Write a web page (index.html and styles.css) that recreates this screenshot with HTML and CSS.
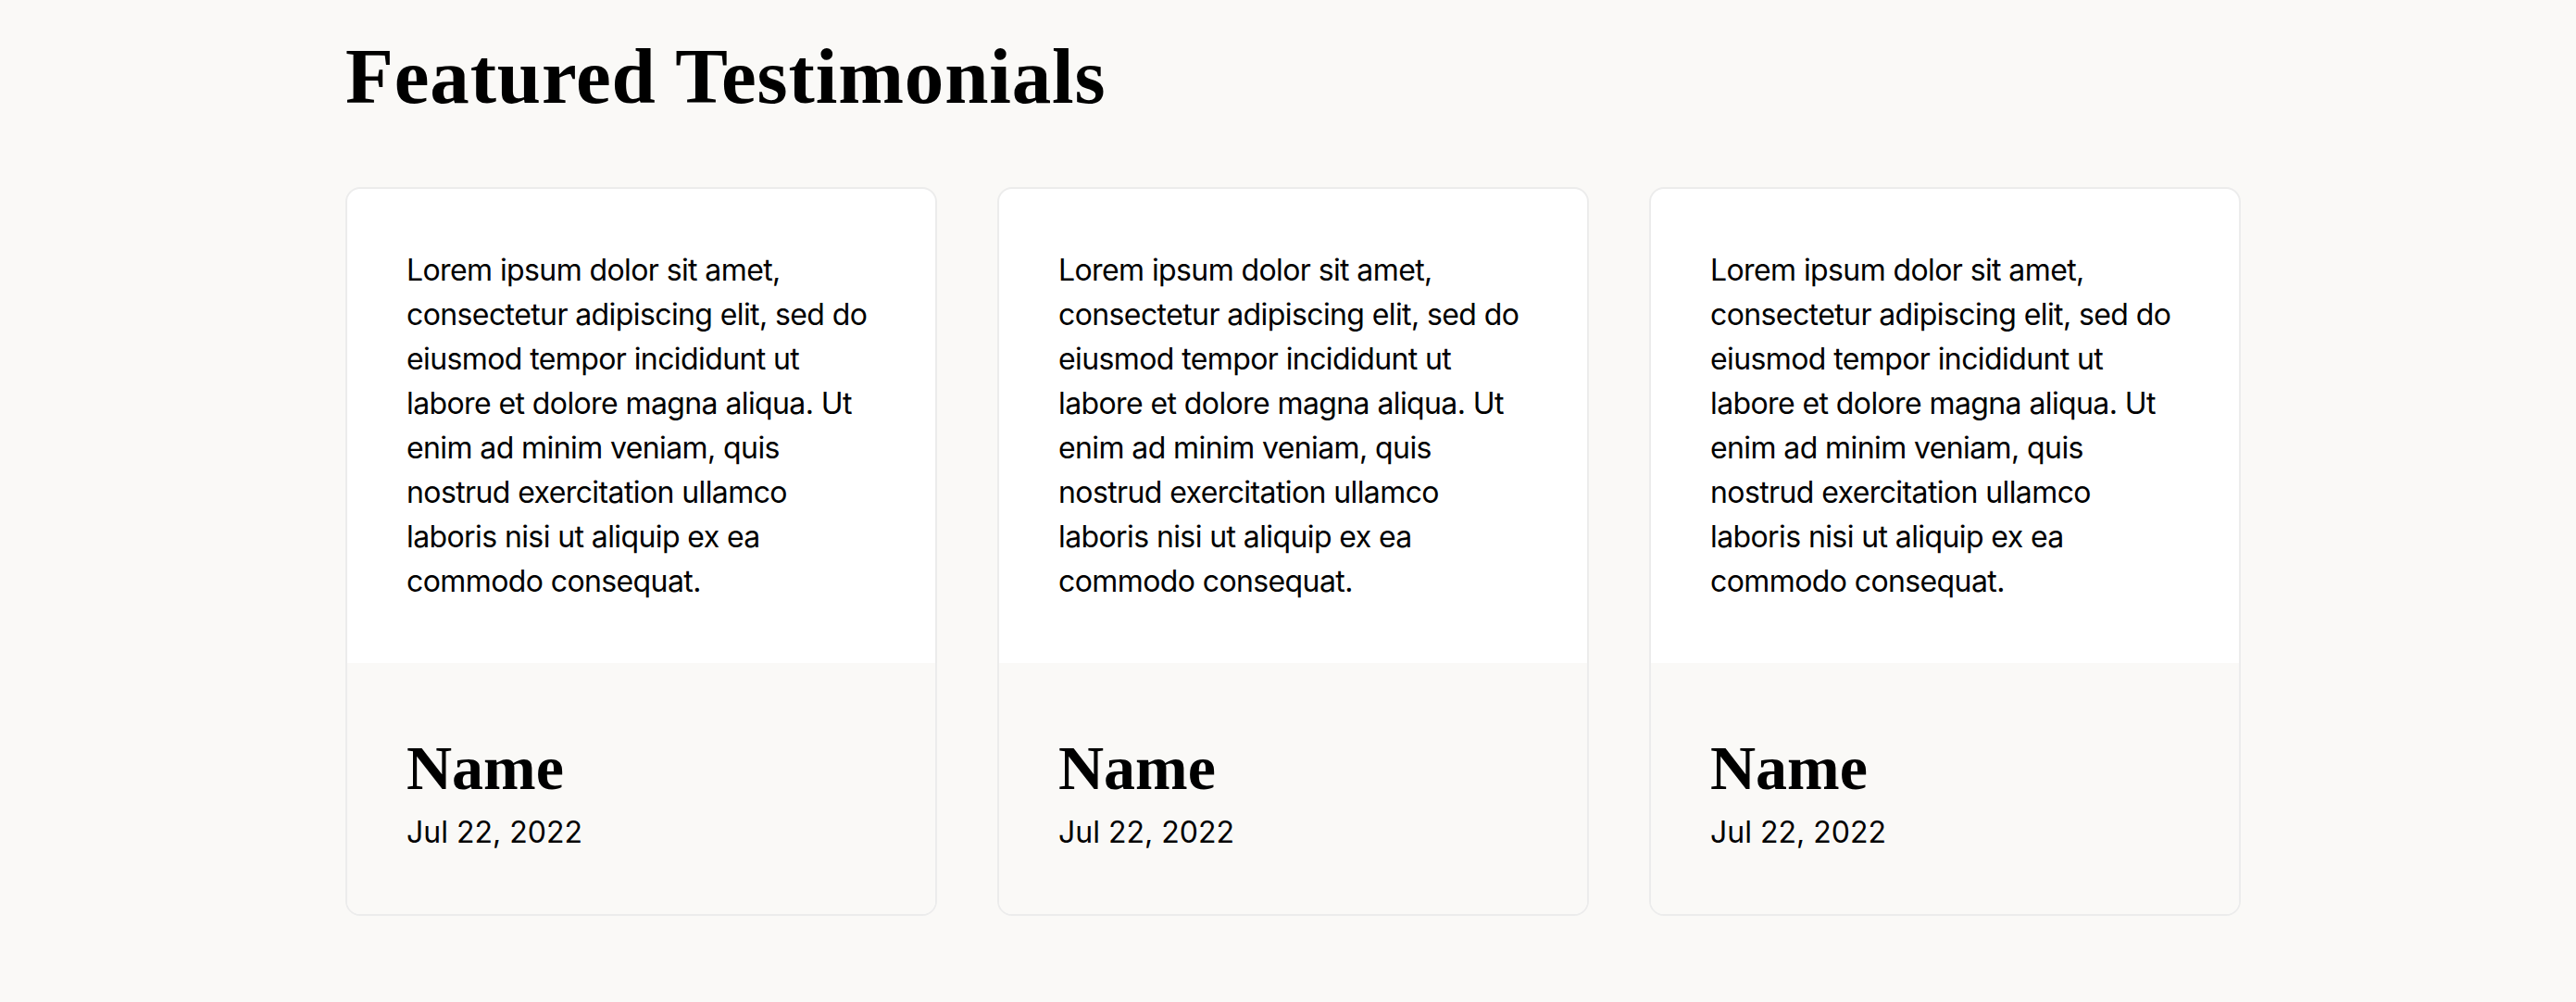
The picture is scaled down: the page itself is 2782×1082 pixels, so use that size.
FILE: index.html
```html
<!DOCTYPE html>
<html lang="en">
<head>
<meta charset="utf-8">
<title>Featured Testimonials</title>
<link rel="stylesheet" href="styles.css">
</head>
<body>
<section class="testimonials">
  <h1 class="title">Featured Testimonials</h1>
  <div class="grid">
    <article class="card">
      <p class="quote">Lorem ipsum dolor sit amet, consectetur adipiscing elit, sed do eiusmod tempor incididunt ut labore et dolore magna aliqua. Ut enim ad minim veniam, quis nostrud exercitation ullamco laboris nisi ut aliquip ex ea commodo consequat.</p>
      <footer class="meta">
        <h2 class="name">Name</h2>
        <div class="date">Jul 22, 2022</div>
      </footer>
    </article>
    <article class="card">
      <p class="quote">Lorem ipsum dolor sit amet, consectetur adipiscing elit, sed do eiusmod tempor incididunt ut labore et dolore magna aliqua. Ut enim ad minim veniam, quis nostrud exercitation ullamco laboris nisi ut aliquip ex ea commodo consequat.</p>
      <footer class="meta">
        <h2 class="name">Name</h2>
        <div class="date">Jul 22, 2022</div>
      </footer>
    </article>
    <article class="card">
      <p class="quote">Lorem ipsum dolor sit amet, consectetur adipiscing elit, sed do eiusmod tempor incididunt ut labore et dolore magna aliqua. Ut enim ad minim veniam, quis nostrud exercitation ullamco laboris nisi ut aliquip ex ea commodo consequat.</p>
      <footer class="meta">
        <h2 class="name">Name</h2>
        <div class="date">Jul 22, 2022</div>
      </footer>
    </article>
  </div>
</section>
</body>
</html>
```

FILE: styles.css
```css
html, body {
  margin: 0;
  padding: 0;
  background: #faf9f7;
  color: #000;
  font-family: Inter, "Noto Sans", sans-serif;
}

.testimonials {
  width: 2047px;
  margin-left: 373px;
  padding-top: 32px;
}

.title {
  margin: 0 0 70px 0;
  font-family: "Liberation Serif", "Times New Roman", serif;
  font-weight: 700;
  font-size: 85px;
  line-height: 100px;
  letter-spacing: 0.85px;
}

.grid {
  display: grid;
  grid-template-columns: repeat(3, 639px);
  column-gap: 65px;
}

.card {
  background: #ffffff;
  border: 2px solid #ececec;
  border-radius: 16px;
  overflow: hidden;
  display: flex;
  flex-direction: column;
}

.quote {
  margin: 0;
  padding: 64px;
  font-size: 32px;
  line-height: 48px;
  letter-spacing: -0.6px;
}

.meta {
  background: #faf9f7;
  padding: 64px;
}

.name {
  margin: 5px 0 0 0;
  font-family: "Liberation Serif", "Times New Roman", serif;
  font-weight: 700;
  font-size: 68px;
  line-height: 88px;
}

.date {
  margin-top: 2px;
  font-size: 32px;
  line-height: 48px;
}
```
